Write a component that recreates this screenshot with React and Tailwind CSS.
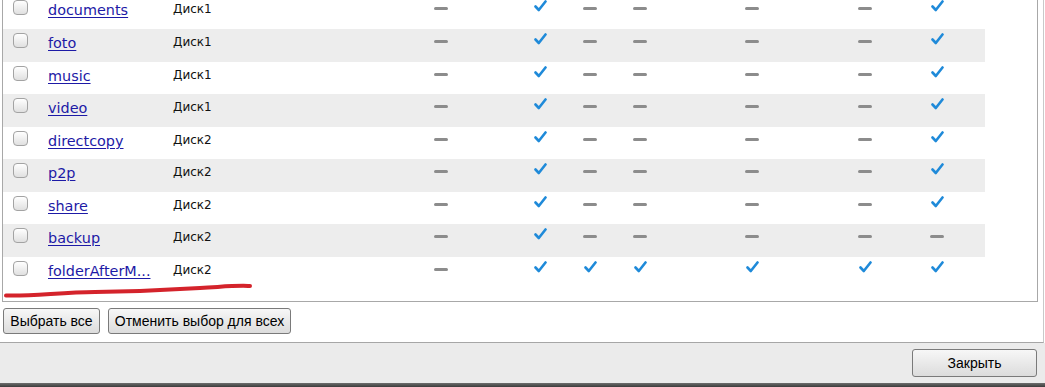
import React from "react";

const rows = [
  { name: "documents", disk: "Диск1", v: [0, 1, 0, 0, 0, 0, 1] },
  { name: "foto", disk: "Диск1", v: [0, 1, 0, 0, 0, 0, 1] },
  { name: "music", disk: "Диск1", v: [0, 1, 0, 0, 0, 0, 1] },
  { name: "video", disk: "Диск1", v: [0, 1, 0, 0, 0, 0, 1] },
  { name: "directcopy", disk: "Диск2", v: [0, 1, 0, 0, 0, 0, 1] },
  { name: "p2p", disk: "Диск2", v: [0, 1, 0, 0, 0, 0, 1] },
  { name: "share", disk: "Диск2", v: [0, 1, 0, 0, 0, 0, 1] },
  { name: "backup", disk: "Диск2", v: [0, 1, 0, 0, 0, 0, 0] },
  { name: "folderAfterM...", disk: "Диск2", v: [0, 1, 1, 1, 1, 1, 1] },
];

// left margin of each 20px icon box, relative to the previous one
const gaps = ["ml-0", "ml-[79px]", "ml-[30px]", "ml-[30px]", "ml-[92px]", "ml-[93px]", "ml-[52px]"];

function Check() {
  return (
    <svg width="13" height="12" viewBox="0 0 13 12" className="mt-[4px]">
      <path d="M1.5 6.5 L4.8 10 L11.5 1.5" fill="none" stroke="#1f8ad9" strokeWidth="2.6" strokeLinecap="round" strokeLinejoin="round" />
    </svg>
  );
}

function Dash() {
  return <div className="mt-[11px] h-[3px] w-[14px] rounded-sm bg-[#8c8c8c]" />;
}

function Row({ row, i }) {
  const tall = [0, 1, 3, 5, 7].includes(i);
  return (
    <div className={`flex items-start w-[982px] ${tall ? "h-[33px]" : "h-[32px]"} ${i % 2 ? "bg-[#ededed]" : "bg-white"}`}>
      <div className="w-[45px] pl-[10px] pt-[4px]">
        <div className="h-[15px] w-[15px] rounded-[4px] border border-[#a3a3a3] bg-gradient-to-b from-white to-[#e0e0e0]" />
      </div>
      <a href="#" className="w-[125px] pt-[4px] text-[14.4px] leading-[20px] text-[#1d1aa6] underline underline-offset-2 font-['DejaVu_Sans',sans-serif]">
        {row.name}
      </a>
      <div className="w-[258px] pt-[5px] text-[12px] leading-[16px] text-[#111] font-['DejaVu_Sans',sans-serif]">{row.disk}</div>
      {row.v.map((on, k) => (
        <div key={k} className={`flex w-[20px] justify-center ${gaps[k]}`}>
          {on ? <Check /> : <Dash />}
        </div>
      ))}
    </div>
  );
}

function Btn({ children, className }) {
  return (
    <button className={`rounded-[3px] border border-[#7a7a7a] bg-gradient-to-b from-[#f7f7f7] to-[#dcdcdc] text-[14px] text-black font-['Liberation_Sans',Arial,sans-serif] ${className}`}>
      {children}
    </button>
  );
}

export default function App() {
  return (
    <div className="relative flex h-[387px] w-[1045px] flex-col overflow-hidden bg-white">
      <div className="flex h-[343px] w-[1044px] shrink-0 flex-col border-r border-b border-r-[#c9c9c9] border-b-[#a6a6a6]">
        <div className="ml-[2px] -mt-[5px] w-[1036px] border border-[#a8a8a8] pb-[12px]">
          {rows.map((r, i) => (
            <Row key={r.name} row={r} i={i} />
          ))}
        </div>
        <div className="mt-[6px] flex gap-[8px] pl-[3px]">
          <Btn className="h-[26px] w-[97px]">Выбрать все</Btn>
          <Btn className="h-[26px] w-[183px]">Отменить выбор для всех</Btn>
        </div>
      </div>
      <div className="flex h-[40px] shrink-0 justify-end bg-[#ebebeb] pr-[8px] pt-[6px]">
        <Btn className="h-[28px] w-[125px]">Закрыть</Btn>
      </div>
      <div className="h-[4px] shrink-0 bg-gradient-to-b from-[#6e6e6e] to-[#3c3c3c]" />
      <svg className="pointer-events-none absolute left-0 top-0" width="1045" height="387">
        <path d="M6 295.5 C 30 296.5, 60 292.5, 95 292 S 160 290.5, 200 288 S 235 285.5, 250 286" fill="none" stroke="#d4232b" strokeWidth="4" strokeLinecap="round" />
      </svg>
    </div>
  );
}
